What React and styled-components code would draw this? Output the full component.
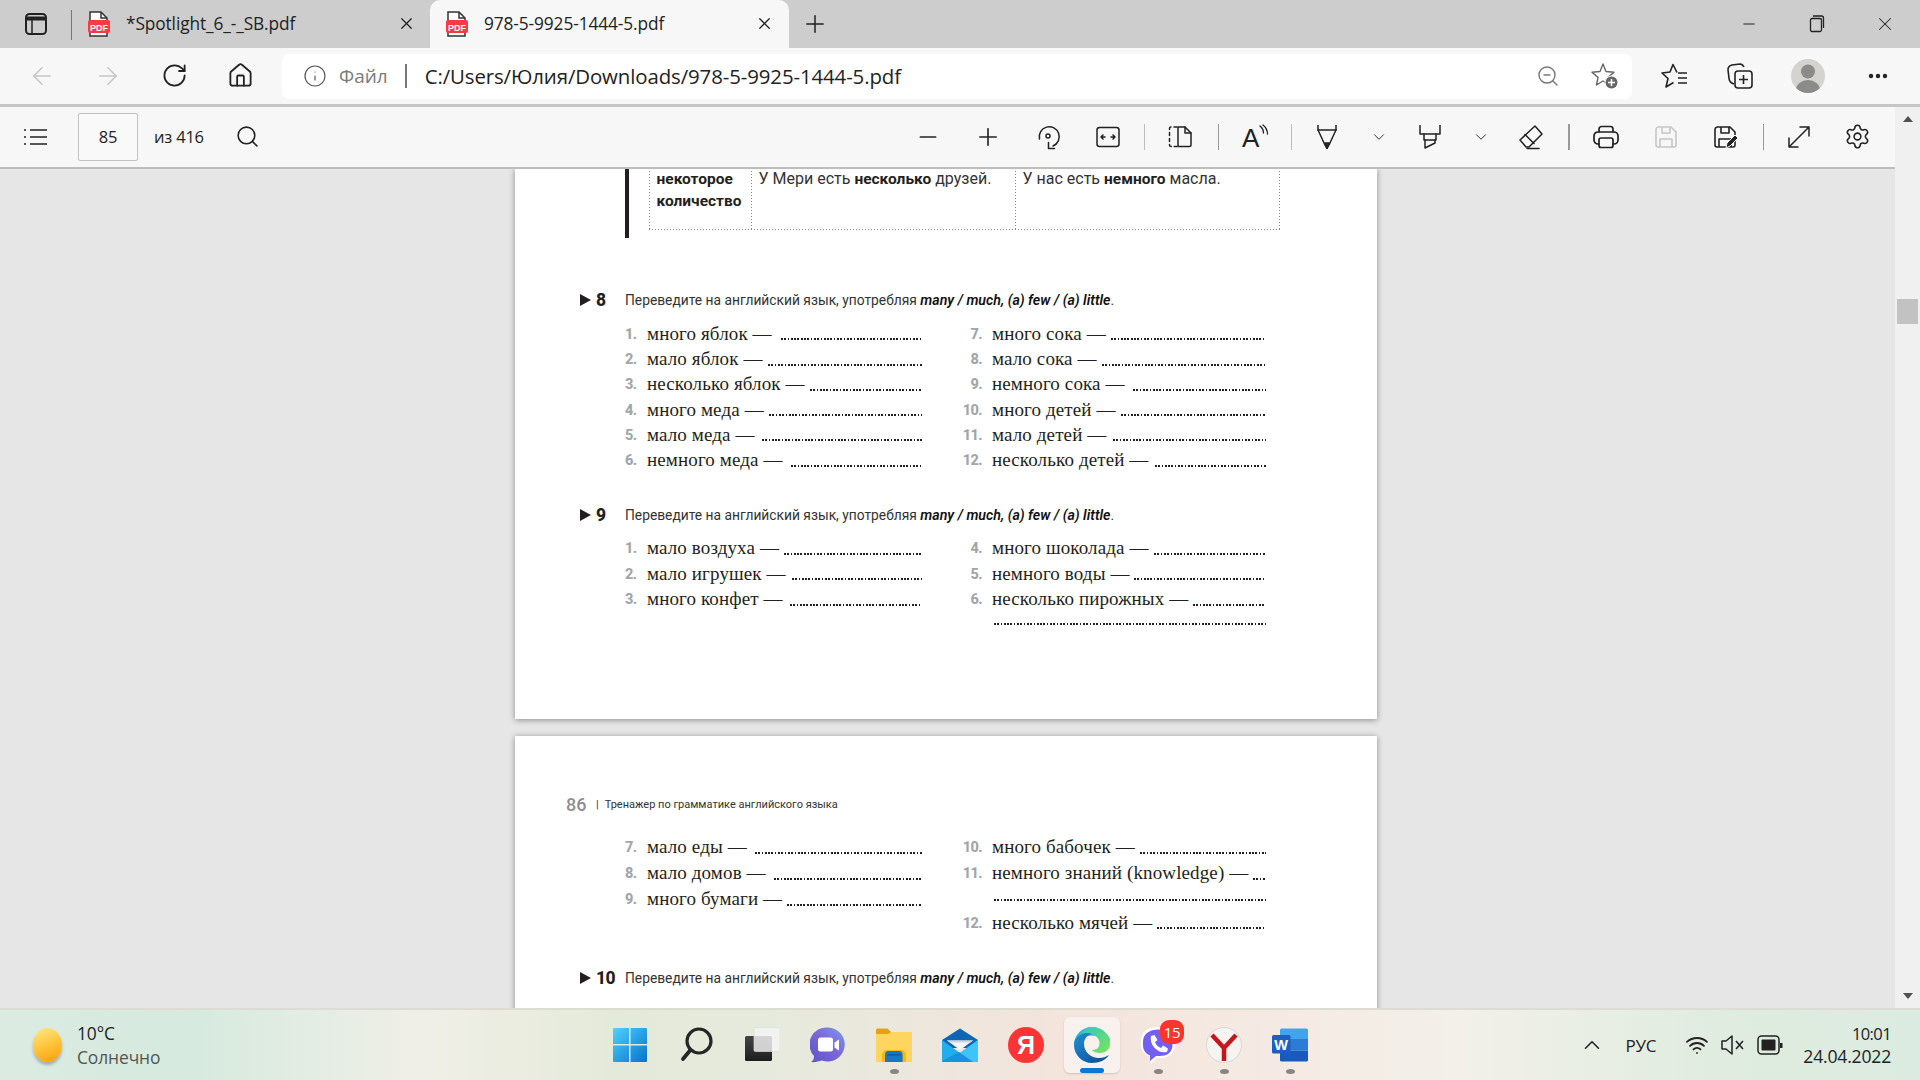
import React from "react";
import styled, { createGlobalStyle } from "styled-components";
import { ArrowLeft, ArrowRight, RotateCw, House, Info, ZoomOut, Search, Minus, Plus, X, ChevronDown, ChevronUp, Settings, MoreHorizontal, Wifi } from "lucide-react";

const Global = createGlobalStyle`
  html, body { margin: 0; padding: 0; width: 1920px; height: 1080px; overflow: hidden; background: #e6e6e6; }
  * { box-sizing: border-box; }
  #root { width: 1920px; height: 1080px; }
`;

const Shell = styled.div`
  width: 1920px; height: 1080px; display: flex; flex-direction: column;
  font-family: "Open Sans", "Noto Sans", sans-serif; color: #222;
`;

const TabBar = styled.div`
  height: 48px; background: #cdcdcd; display: flex; align-items: flex-end; flex: none;
`;
const SideSlot = styled.div`
  width: 71px; height: 48px; display: flex; align-items: center; justify-content: center; padding-bottom: 1px;
`;
const TabDivider = styled.div`
  width: 1px; height: 30px; background: #777; align-self: flex-start; margin-top: 10px;
`;
const Tab = styled.div`
  width: ${p => p.$w}px; height: 48px; display: flex; align-items: center; padding-left: ${p => p.$pl}px;
  background: ${p => (p.$active ? "#f7f7f7" : "transparent")};
  border-radius: 10px 10px 0 0; padding-bottom: 1px;
`;
const TabTitle = styled.span`
  font-size: 17.3px; margin-left: 15px; width: 270px; white-space: nowrap; letter-spacing: -0.1px;
`;
const TabClose = styled.span`
  display: flex; width: 20px; justify-content: center;
`;
const NewTab = styled.div`
  width: 52px; height: 48px; display: flex; align-items: center; justify-content: center; padding-bottom: 1px;
`;
const WinControls = styled.div`
  margin-left: auto; display: flex; height: 48px; align-items: center; padding-right: 1px;
`;
const WinBtn = styled.div`
  width: 68px; display: flex; justify-content: center;
`;

const NavBar = styled.div`
  height: 59px; background: #f7f7f7; border-bottom: 3px solid #c6c6c6; display: flex; align-items: center; flex: none;
`;
const NavBtn = styled.div`
  width: ${p => p.$w || 66}px; display: flex; justify-content: center; flex: none; color: ${p => p.$color || "#222"};
`;
const NavGroup = styled.div`
  display: flex; margin-left: 9px; margin-right: 9px;
`;
const Address = styled.div`
  width: 1350px; height: 45px; background: #fff; border-radius: 7px; display: flex; align-items: center; padding-left: 21px; flex: none;
`;
const Protocol = styled.span`
  font-size: 19px; color: #7b7b7b; margin-left: 12px;
`;
const AddrDivider = styled.span`
  width: 2px; height: 24px; background: #777; margin: 0 18px 0 17px;
`;
const Url = styled.span`
  font-size: 20.4px; color: #222; letter-spacing: -0.1px; white-space: nowrap;
`;
const AddrEnd = styled.div`
  margin-left: auto; display: flex; align-items: center; gap: 31px; padding-right: 13px;
`;
const NavEnd = styled.div`
  display: flex; align-items: center; margin-left: 10px;
`;
const Avatar = styled.div`
  width: 34px; height: 34px; border-radius: 50%; background: #d4d3d0; overflow: hidden; display: flex;
`;

const Work = styled.div`
  flex: 1; min-height: 0; display: flex;
`;
const MainCol = styled.div`
  width: 1895px; display: flex; flex-direction: column; min-width: 0;
`;
const PdfBar = styled.div`
  height: 62px; background: #f7f7f7; border-bottom: 2px solid #bdbdbd; display: flex; align-items: center; flex: none; padding-bottom: 1px;
`;
const BarLeft = styled.div`
  width: 898px; display: flex; align-items: center; flex: none;
`;
const BarSlot = styled.div`
  width: ${p => p.$w}px; display: flex; justify-content: center; align-items: center; flex: none; color: ${p => p.$color || "#222"};
`;
const PageInput = styled.div`
  width: 60px; height: 48px; border: 1px solid #c2c2c2; border-radius: 2px; background: #f9f9f9;
  display: flex; align-items: center; justify-content: center; font-size: 16.5px; margin-left: 6px; letter-spacing: -0.3px;
`;
const PageTotal = styled.span`
  font-size: 16.5px; margin-left: 16px; letter-spacing: -0.2px; width: 81px;
`;
const BarSep = styled.div`
  width: ${p => p.$wd || 1}px; height: 26px; background: ${p => p.$color || "#bcbcbc"};
`;

const Viewport = styled.div`
  flex: 1; min-height: 0; overflow: hidden; background: #e6e6e6; padding-left: 515px;
`;
const Page = styled.div`
  width: 862px; height: ${p => p.$h}px; background: #fff; box-shadow: 0 1px 6px rgba(0,0,0,.4); margin-bottom: 17px;
  padding-top: ${p => p.$pt || 0}px; font-family: "Roboto", "Liberation Sans", sans-serif;
`;
const Callout = styled.div`
  margin-left: 110px; display: flex; height: 69px;
`;
const CalloutBar = styled.div`
  width: 4px; background: #231f20;
`;
const dotV = `linear-gradient(#888 50%, transparent 50%)`;
const dotH = `linear-gradient(90deg, #888 50%, transparent 50%)`;
const Table = styled.div`
  margin-left: 20px; margin-top: -1px; width: 631px; height: 62px; display: grid; grid-template-columns: 102px 264px 265px;
  background-image: ${dotH}, ${dotV};
  background-size: 3px 1px, 1px 3px;
  background-repeat: repeat-x, repeat-y;
  background-position: left bottom, right top;
`;
const Cell = styled.div`
  background-image: ${dotV}; background-size: 1px 3px; background-repeat: repeat-y; background-position: left top;
  padding-left: 7.5px; font-size: 16px; line-height: 21px; color: #333;
  b { color: #231f20; font-weight: 700; font-size: 15.5px; }
`;
const Head = styled.div`
  margin-left: 65px; height: 20px; margin-top: ${p => p.$mt}px; display: flex; align-items: center; font-size: 13.8px; color: #333;
  b { color: #111; font-style: italic; font-weight: 600; font-size: 14.2px; }
`;
const Marker = styled.div`
  width: 45px; flex: none; display: flex; align-items: center; font-weight: 800; font-size: 17.5px; color: #231f20; letter-spacing: -0.5px;
`;
const Triangle = styled.span`
  width: 0; height: 0; border-left: 11px solid #231f20; border-top: 6.5px solid transparent; border-bottom: 6.5px solid transparent; margin-right: 5px;
`;
const Columns = styled.div`
  margin-left: 110px; margin-top: ${p => p.$mt}px; display: flex;
`;
const Col = styled.div`
  width: ${p => p.$w}px; margin-right: ${p => p.$mr || 0}px;
`;
const Row = styled.div`
  height: ${p => p.$h}px; display: flex; align-items: center; padding-left: ${p => p.$indent || 0}px;
`;
const Num = styled.span`
  width: ${p => p.$w}px; flex: none; font-size: 14.5px; font-weight: 800; color: #a3a5a8; padding-top: 1px;
  text-align: ${p => p.$right ? "right" : "left"}; padding-right: ${p => p.$right ? 10 : 0}px; letter-spacing: -0.6px;
`;
const ItemText = styled.span`
  font-family: "Liberation Serif", serif; font-size: 19px; color: #231f20; white-space: nowrap; letter-spacing: 0.12px;
`;
const Dots = styled.span`
  flex: 1; align-self: flex-end; height: 2px; margin: 0 0 ${p => p.$mb || 6}px ${p => p.$gap || 0}px; min-width: 0;
  background: repeating-linear-gradient(90deg, #231f20 0 1.7px, transparent 1.7px 3.3px);
`;
const RunHead = styled.div`
  margin-left: 51px; height: 20px; display: flex; align-items: center; font-size: 11px; color: #333;
`;
const PageNo = styled.span`
  font-size: 18px; font-weight: 500; color: #8d8f92; margin-right: 10px; width: 20px;
`;
const Pipe = styled.span`
  margin-right: 6px;
`;

const Scroll = styled.div`
  width: 25px; background: #f0f0f0; display: flex; flex-direction: column; align-items: center; flex: none;
`;
const ArrowUp = styled.span`
  margin-top: 9px; width: 0; height: 0; border-left: 5.5px solid transparent; border-right: 5.5px solid transparent; border-bottom: 6px solid #505050;
`;
const Thumb = styled.div`
  margin-top: 177px; width: 21px; height: 25px; background: #c2c2c2;
`;
const ArrowDown = styled.span`
  margin-top: auto; margin-bottom: 9px; width: 0; height: 0; border-left: 5.5px solid transparent; border-right: 5.5px solid transparent; border-top: 6px solid #505050;
`;

const Taskbar = styled.div`
  height: 72px; flex: none; display: flex; align-items: center;
  background: linear-gradient(90deg,#dbebe1 0%,#d6eadf 10%,#f0efe7 22%,#e4ead9 32%,#e6eadd 40%,#f3e4dc 55%,#f5ebe4 68%,#f2f0e9 76%,#dfecdf 90%,#dcebe1 100%);
  border-top: 2px solid #dddcd1;
`;
const Weather = styled.div`
  width: 597px; display: flex; align-items: center; padding-left: 33px; flex: none;
`;
const Sun = styled.div`
  width: 29px; height: 34px; border-radius: 50%; background: linear-gradient(160deg,#ffe680 5%,#ffc53d 50%,#ff9f0a 95%); box-shadow: 0 3px 3px rgba(0,0,0,.25);
`;
const WeatherText = styled.div`
  margin-left: 15px; display: flex; flex-direction: column; gap: 3px; font-size: 17.4px; line-height: 21px; letter-spacing: -0.1px;
`;
const Muted = styled.span`
  color: #555;
`;
const Apps = styled.div`
  display: flex; height: 70px;
`;
const AppSlot = styled.div`
  width: 66px; height: 70px; display: flex; align-items: center; justify-content: center; position: relative;
  &::before {
    content: ""; display: ${p => p.$active ? "block" : "none"}; position: absolute; left: 5px; right: 5px; top: 7px; bottom: 7px;
    background: #f8f1ed; border-radius: 6px; box-shadow: 0 1px 2px rgba(0,0,0,.15);
  }
  > svg { position: relative; }
`;
const RunDot = styled.span`
  position: absolute; left: 50%; bottom: 6px; margin-left: -4.5px; width: 9px; height: 5px; border-radius: 50%; background: #858585;
`;
const ActiveBar = styled.span`
  position: absolute; left: 50%; bottom: 7px; margin-left: -12px; width: 24px; height: 5px; border-radius: 3px; background: #0c78d4;
`;
const Badge = styled.span`
  position: absolute; left: 35px; top: 10px; width: 24px; height: 24px; border-radius: 9px; background: #f9352e; color: #fff;
  font-size: 15px; line-height: 24px; text-align: center; letter-spacing: -0.3px;
`;
const Tray = styled.div`
  margin-left: auto; display: flex; align-items: center; padding-right: 29px;
`;
const TrayLang = styled.span`
  font-size: 17px; margin: 0 29px 0 20px; letter-spacing: -0.2px;
`;
const TrayGap = styled.span`
  width: 12px;
`;
const Clock = styled.div`
  margin-left: 20px; text-align: right; font-size: 17.6px; line-height: 23px; letter-spacing: -0.2px; display: flex; flex-direction: column;
`;
const ClockTime = styled.span`
  font-size: 16.5px; letter-spacing: -0.6px;
`;

const S = { fill: "none", stroke: "currentColor", strokeWidth: 1.5, strokeLinecap: "round", strokeLinejoin: "round" };

const PdfIcon = () => (
  <svg width="24" height="26" viewBox="0 0 24 26">
    <path d="M3 1h11l6 6v18H3z" fill="#fff" stroke="#333" strokeWidth="1.5" />
    <path d="M14 1v6h6" fill="none" stroke="#333" strokeWidth="1.5" />
    <rect x="1" y="9" width="22" height="13" rx="2" fill="#f53c45" />
    <text x="12" y="19.5" textAnchor="middle" fontSize="9" fontWeight="700" fill="#fff" fontFamily="Liberation Sans">PDF</text>
  </svg>
);
const SideIcon = () => (
  <svg width="24" height="24" viewBox="0 0 24 24" fill="none" stroke="#222" strokeWidth="2">
    <rect x="2" y="2" width="20" height="20" rx="3.5" />
    <path d="M3 6.5h18" strokeWidth="4" />
    <path d="M8 8v14" strokeWidth="1.5" />
  </svg>
);
const RestoreIcon = () => (
  <svg width="16" height="18" viewBox="0 0 16 18" fill="none" stroke="#222" strokeWidth="1.3">
    <rect x="1.5" y="3.5" width="11" height="13" rx="1.5" />
    <path d="M4 1h8.5a2 2 0 0 1 2 2v10" />
  </svg>
);
const FavAdd = () => (
  <svg width="28" height="28" viewBox="0 0 28 28" fill="none" stroke="#666" strokeWidth="1.4" strokeLinejoin="round">
    <path d="M12 2l3 7.5 8 .7-6 5.2 1.5 7.6L12 19l-6.5 4 1.5-7.6-6-5.2 8-.7z" />
    <circle cx="20.5" cy="20.5" r="6.5" fill="#666" stroke="#fff" strokeWidth="1" />
    <path d="M20.5 17v7M17 20.500h7" stroke="#fff" strokeWidth="1.6" />
  </svg>
);
const FavList = () => (
  <svg width="28" height="28" viewBox="0 0 28 28" fill="none" stroke="#222" strokeWidth="1.6" strokeLinejoin="round">
    <path d="M16 10.500L12 2.500 9 10l-8 1 6 5.500L5 25l7.500-4.500" />
    <path d="M17 11h9M17 16h9M17 21h9" />
  </svg>
);
const Collections = () => (
  <svg width="28" height="28" viewBox="0 0 28 28" fill="none" stroke="#222" strokeWidth="1.6" strokeLinejoin="round">
    <path d="M8 22c-3-1-5-3-5-6l-1-8a5 5 0 0 1 4-5l8-1c2 0 3 1 4 3" />
    <rect x="9" y="9" width="17" height="17" rx="3" />
    <path d="M17.500 13v9M13 17.500h9" />
  </svg>
);
const Person = () => (
  <svg width="34" height="34" viewBox="0 0 34 34" fill="#8b8b89">
    <circle cx="17" cy="12.5" r="7" />
    <ellipse cx="17" cy="31" rx="12" ry="10" />
  </svg>
);
const ListIcon = () => (
  <svg width="26" height="20" viewBox="0 0 26 20" fill="none" stroke="#222" strokeWidth="1.6">
    <path d="M7 3h17M7 10h17M7 17h17" />
    <path d="M1 3h2M1 10h2M1 17h2" />
  </svg>
);
const RotateIcon = () => (
  <svg width="26" height="26" viewBox="0 0 26 26" {...S}>
    <path d="M4.500 15A10 10 0 1 1 18 22" />
    <circle cx="13" cy="12" r="2" />
    <path d="M13.500 18.500v6h6" />
  </svg>
);
const FitIcon = () => (
  <svg width="24" height="22" viewBox="0 0 24 22" {...S}>
    <rect x="1" y="1.5" width="22" height="19" rx="2.5" />
    <path d="M9 11H5M7 9l-2 2 2 2M15 11h4M17 9l2 2-2 2" />
  </svg>
);
const TwoPage = () => (
  <svg width="24" height="24" viewBox="0 0 24 24" {...S}>
    <path d="M9 2H3a1.500 1.500 0 0 0-1.500 1.500V20A1.500 1.500 0 0 0 3 21.500h6" strokeDasharray="3 3" />
    <path d="M10 2h7l6 6v12a1.500 1.500 0 0 1-1.500 1.500H10z" />
    <path d="M17 2v6h6" />
  </svg>
);
const ReadIcon = () => (
  <svg width="32" height="34" viewBox="0 0 32 34" fill="none" stroke="#222" strokeWidth="1.3" strokeLinecap="round">
    <text x="4" y="27" fontSize="26" fontFamily="Liberation Sans" fill="#222" stroke="none">A</text>
    <path d="M22 6c2.500 2 3.500 4 3.500 7" />
    <path d="M25 5c3 2.500 4.500 5 4.500 9" />
  </svg>
);
const PenIcon = () => (
  <svg width="24" height="24" viewBox="0 0 24 24" {...S}>
    <path d="M3 0v5h18V0" />
    <path d="M3 5l7 15 2 3.500 2-3.500 7-15" />
    <path d="M10 18h4l-2 5.500z" fill="#333" />
  </svg>
);
const MarkerIcon = () => (
  <svg width="24" height="24" viewBox="0 0 24 24" {...S}>
    <path d="M2 0v9h20V0" />
    <path d="M6 9v6h12V9" />
    <path d="M7 15v8l10-5v-3" />
  </svg>
);
const EraserIcon = () => (
  <svg width="26" height="26" viewBox="0 0 26 26" {...S}>
    <path d="M17 2l7 8-13 13H8l-6-7z" />
    <path d="M7 10.500l9 9" />
    <path d="M9 24.500h12" />
  </svg>
);
const PrintIcon = () => (
  <svg width="26" height="24" viewBox="0 0 26 24" {...S} strokeWidth="1.7">
    <path d="M6 7V4a2.500 2.500 0 0 1 2.500-2.500h9A2.500 2.500 0 0 1 20 4v3" />
    <path d="M6 19H5a4 4 0 0 1-4-4v-4a4 4 0 0 1 4-4h16a4 4 0 0 1 4 4v4a4 4 0 0 1-4 4h-1" />
    <rect x="6" y="13" width="14" height="9.500" rx="2" />
  </svg>
);
const SaveIcon = ({ c = "#222", pen }) => (
  <svg width="24" height="24" viewBox="0 0 24 24" fill="none" stroke={c} strokeWidth="1.6" strokeLinejoin="round">
    <path d="M5 2h12l5 5v13a2 2 0 0 1-2 2H4a2 2 0 0 1-2-2V4.500A2.500 2.500 0 0 1 5 2z" />
    <path d="M8 2v6h8V2M6 22v-8h12v8" />
    {pen && <path d="M13 23l1-5 8-8 3 3-8 8z" fill="#222" stroke="#f7f7f7" strokeWidth="1" />}
  </svg>
);
const ExpandIcon = () => (
  <svg width="24" height="24" viewBox="0 0 24 24" {...S}>
    <path d="M2 22L22 2M13 2h9v9M2 13v9h9" />
  </svg>
);

const WinLogo = () => (
  <svg width="36" height="36" viewBox="0 0 36 36">
    <defs>
      <linearGradient id="wg" x1="0" y1="0" x2="1" y2="1"><stop offset="0" stopColor="#4fd2fd" /><stop offset="1" stopColor="#0473cf" /></linearGradient>
    </defs>
    <path d="M1 2a1 1 0 0 1 1-1h15v16H1zM18.500 1H34a1 1 0 0 1 1 1v15H18.500zM1 18.500h16V35H2a1 1 0 0 1-1-1zM18.500 18.500H35V34a1 1 0 0 1-1 1H18.500z" fill="url(#wg)" />
  </svg>
);
const SearchLogo = () => (
  <svg width="34" height="36" viewBox="0 0 34 36" fill="none" stroke="#262626" strokeLinecap="round">
    <circle cx="20" cy="14" r="12" strokeWidth="3.2" />
    <path d="M11 23.500L4 32" strokeWidth="3.8" />
  </svg>
);
const TaskLogo = () => (
  <svg width="36" height="36" viewBox="0 0 36 36">
    <defs><linearGradient id="tg" x1="0" y1="0" x2="0" y2="1"><stop offset="0" stopColor="#444" /><stop offset="1" stopColor="#1e1e1e" /></linearGradient></defs>
    <rect x="1" y="9" width="27" height="25" rx="1.5" fill="url(#tg)" />
    <rect x="10" y="0.500" width="26" height="24" rx="1.5" fill="#f4f4f4" fillOpacity=".82" stroke="#dcdcdc" strokeWidth=".7" />
  </svg>
);
const MeetLogo = () => (
  <svg width="36" height="36" viewBox="0 0 36 36">
    <defs><linearGradient id="mg" x1="1" y1="0" x2="0" y2="1"><stop offset="0" stopColor="#7b9bf0" /><stop offset=".5" stopColor="#7a66d4" /><stop offset="1" stopColor="#5a56c6" /></linearGradient></defs>
    <path d="M18 0.500a17 17 0 1 1-6 33c-3 1-7 2-11 1.500 2-1 3-3 3-6A17 17 0 0 1 18 .500z" fill="url(#mg)" />
    <rect x="8" y="10.500" width="15" height="14" rx="2.500" fill="#fff" />
    <path d="M24.500 15.500l4.500-3v11l-4.500-3z" fill="#fff" />
  </svg>
);
const FolderLogo = () => (
  <svg width="38" height="34" viewBox="0 0 38 34">
    <path d="M1 2a1.500 1.500 0 0 1 1.500-1.500h10L16 4h20.500A1.500 1.500 0 0 1 37 5.500V11H1z" fill="#e3a11a" />
    <path d="M1 6h12l3-2h21v29a1 1 0 0 1-1 1H2a1 1 0 0 1-1-1z" fill="#fdd55f" />
    <path d="M7 34v-7a5 5 0 0 1 5-5h14a5 5 0 0 1 5 5v7z" fill="#f6b810" />
    <path d="M8 34v-7a4 4 0 0 1 4-4h14a4 4 0 0 1 4 4v7z" fill="#1478c7" transform="translate(3.600 0) scale(.8 1)" />
    <rect x="12.500" y="26" width="13" height="1.600" fill="#0d5ea5" />
  </svg>
);
const MailLogo = () => (
  <svg width="38" height="34" viewBox="0 0 38 34">
    <path d="M19 0.500L37 12v8H1v-8z" fill="#0f66b5" />
    <path d="M6 12.500h26L19 22z" fill="#f3f5f7" />
    <path d="M6 12.500h26l-3 2H9z" fill="#cfd4d9" />
    <path d="M1 12l18 13 18-13v21a1 1 0 0 1-1 1H2a1 1 0 0 1-1-1z" fill="#22aeee" />
    <path d="M19 25L37 12v21a1 1 0 0 1-1 1H30z" fill="#3cc5f6" />
    <path d="M1 33l17-9 14 10H2a1 1 0 0 1-1-1z" fill="#1692e0" />
  </svg>
);
const YaLogo = () => (
  <svg width="36" height="36" viewBox="0 0 36 36">
    <circle cx="18" cy="18" r="18" fill="#fb3535" />
    <text x="18" y="27" textAnchor="middle" fontSize="25" fontWeight="700" fill="#fff" fontFamily="Liberation Sans">Я</text>
  </svg>
);
const EdgeLogo = () => (
  <svg width="38" height="38" viewBox="0 0 38 38">
    <defs>
      <linearGradient id="eg1" x1="0" y1="0" x2="1" y2="1"><stop offset="0" stopColor="#2ab0de" /><stop offset="1" stopColor="#37c8c9" /></linearGradient>
      <linearGradient id="eg2" x1="0" y1="0" x2="1" y2="1"><stop offset="0" stopColor="#2fc6c2" /><stop offset="1" stopColor="#7ae65a" /></linearGradient>
      <linearGradient id="eg3" x1="0" y1="0" x2="1" y2="1"><stop offset="0" stopColor="#1f8fd6" /><stop offset="1" stopColor="#0b4a92" /></linearGradient>
    </defs>
    <path d="M1 19C1 9 9 1 19 1c8 0 15 5 18 12 0 2-1 4-4 5-4-7-12-10-19-8-6 2-11 6-13 9z" fill="url(#eg1)" />
    <path d="M19 1c10 0 18 8 18 17 0 5-4 9-10 9-3 0-7-1-8-3 3 0 6-1 7-4 2-4-1-9-5-11-5-3-11-2-15 1C9 5 14 1 19 1z" fill="url(#eg2)" />
    <path d="M1 19c0-7 6-12 13-12 2 0 3 0 5 1-5 1-8 5-8 10 0 8 7 14 15 14 4 0 7-1 10-3-3 5-10 8-17 8-10 0-18-8-18-18z" fill="url(#eg3)" />
    <path d="M19 15c-3 0-4 2-4 4 0 4 5 7 11 7 3 0 6-1 8-3-2 2-5 3-8 3-6 0-12-3-12-7 0-2 2-4 5-4z" fill="#f8f1ed" />
  </svg>
);
const ViberLogo = () => (
  <svg width="36" height="38" viewBox="0 0 36 38">
    <path d="M18 1c10 0 17 5 17 14v4c0 9-7 13-15 13h-3l-6 6v-7C5 29 1 25 1 18v-3C1 6 8 1 18 1z" fill="#fff" />
    <path d="M18 3.500c8 0 14.500 4 14.500 11.500v4c0 8-6 11-13 11h-3.500l-6 5v-5.500c-4-1.500-7-5-7-10.500v-4C3.500 7.500 10 3.500 18 3.500z" fill="#7360f2" />
    <path d="M11 10l3.500-1 3 5-2.500 2c1 3 3 5 6 6l2-2.500 5 3-1 3.500C18 28 9 19 11 10z" fill="#fff" />
  </svg>
);
const YBrowser = () => (
  <svg width="36" height="36" viewBox="0 0 36 36">
    <circle cx="18" cy="18" r="17.500" fill="#f6f4f1" stroke="#d8d6d3" />
    <path d="M6 8l12 13 12-13M18 21v13" fill="none" stroke="#c7161b" strokeWidth="4.500" />
  </svg>
);
const WordLogo = () => (
  <svg width="36" height="34" viewBox="0 0 36 34">
    <path d="M8 2a1.500 1.500 0 0 1 1.500-1.500h25A1.500 1.500 0 0 1 36 2v9H8z" fill="#41a5ee" />
    <rect x="8" y="11" width="28" height="11.500" fill="#2b7cd3" />
    <path d="M8 22.500h28V32a1.500 1.500 0 0 1-1.500 1.500h-25A1.500 1.500 0 0 1 8 32z" fill="#185abd" />
    <rect x="0" y="7" width="18.500" height="18.500" rx="1.500" fill="#1c5fc0" />
    <text x="9.200" y="22" textAnchor="middle" fontSize="14.500" fontWeight="700" fill="#fff" fontFamily="Liberation Sans">W</text>
  </svg>
);
const MuteIcon = () => (
  <svg width="24" height="22" viewBox="0 0 24 22" fill="none" stroke="#222" strokeWidth="1.5" strokeLinejoin="round">
    <path d="M1 7h4l6-5v18l-6-5H1z" />
    <path d="M15 7l7 8M22 7l-7 8" />
  </svg>
);
const BatteryIcon = () => (
  <svg width="26" height="22" viewBox="0 0 26 22" fill="none" stroke="#222" strokeWidth="1.5">
    <rect x="1" y="2" width="21" height="18" rx="3.500" />
    <rect x="4.500" y="5.500" width="14" height="11" rx="1" fill="#222" stroke="none" />
    <rect x="23" y="9" width="2.500" height="5" fill="#222" stroke="none" />
  </svg>
);

const dash = " —";

function ExRow({ n, text, left, h = 25.3, gap }) {
  return (
    <Row $h={h}>
      <Num $w={left ? 22 : 33} $right={!left}>{n}.</Num>
      <ItemText>{text}{dash}</ItemText>
      <Dots $gap={gap} />
    </Row>
  );
}

function Exercise({ no, mt }) {
  return (
    <Head $mt={mt}>
      <Marker><Triangle />{no}</Marker>
      <span>Переведите на английский язык, употребляя <b>many / much, (a) few / (a) little</b>.</span>
    </Head>
  );
}

const ex8L = [[1, "много яблок", 9], [2, "мало яблок", 5], [3, "несколько яблок", 5], [4, "много меда", 5], [5, "мало меда", 7], [6, "немного меда", 8]];
const ex8R = [[7, "много сока", 5], [8, "мало сока", 5], [9, "немного сока", 8], [10, "много детей", 5], [11, "мало детей", 7], [12, "несколько детей", 6]];
const ex9L = [[1, "мало воздуха", 5], [2, "мало игрушек", 6], [3, "много конфет", 7]];
const ex9R = [[4, "много шоколада", 5], [5, "немного воды", 4], [6, "несколько пирожных", 5]];
const p2L = [[7, "мало еды", 8], [8, "мало домов", 8], [9, "много бумаги", 5]];

const BarIcons = [
  [60, <Minus size={26} strokeWidth={1.6} />], [60, <Plus size={28} strokeWidth={1.4} />], [60, <RotateIcon />], [60, <FitIcon />],
  [12, <BarSep />], [60, <TwoPage />], [16, <BarSep $color="#999" />], [56, <ReadIcon />], [18, <BarSep />],
  [54, <PenIcon />], [50, <ChevronDown size={18} strokeWidth={1.2} />], [52, <MarkerIcon />], [50, <ChevronDown size={18} strokeWidth={1.2} />],
  [50, <EraserIcon />], [26, <BarSep $color="#999" $wd={2} />], [48, <PrintIcon />], [72, <SaveIcon c="#c6c6c6" />],
  [46, <SaveIcon pen />], [30, <BarSep $color="#999" />], [42, <ExpandIcon />], [75, <Settings size={27} strokeWidth={1.4} />],
];

export default function App() {
  return (
    <Shell>
      <Global />
      <TabBar>
        <SideSlot><SideIcon /></SideSlot>
        <TabDivider />
        <Tab $w={358} $pl={15}>
          <PdfIcon /><TabTitle>*Spotlight_6_-_SB.pdf</TabTitle>
          <TabClose><X size={19} strokeWidth={1.6} /></TabClose>
        </Tab>
        <Tab $w={359} $active $pl={15}>
          <PdfIcon /><TabTitle>978-5-9925-1444-5.pdf</TabTitle>
          <TabClose><X size={19} strokeWidth={1.6} /></TabClose>
        </Tab>
        <NewTab><Plus size={28} strokeWidth={1.3} /></NewTab>
        <WinControls>
          <WinBtn><Minus size={18} strokeWidth={1.3} /></WinBtn>
          <WinBtn><RestoreIcon /></WinBtn>
          <WinBtn><X size={22} strokeWidth={1.1} /></WinBtn>
        </WinControls>
      </TabBar>

      <NavBar>
        <NavGroup>
          <NavBtn $color="#c6c6c6"><ArrowLeft size={28} strokeWidth={1.3} /></NavBtn>
          <NavBtn $color="#c6c6c6"><ArrowRight size={28} strokeWidth={1.3} /></NavBtn>
          <NavBtn><RotateCw size={27} strokeWidth={1.6} /></NavBtn>
          <NavBtn><House size={27} strokeWidth={1.6} /></NavBtn>
        </NavGroup>
        <Address>
          <Info size={24} strokeWidth={1.2} color="#555" />
          <Protocol>Файл</Protocol>
          <AddrDivider />
          <Url>C:/Users/Юлия/Downloads/978-5-9925-1444-5.pdf</Url>
          <AddrEnd>
            <ZoomOut size={24} strokeWidth={1.4} color="#777" />
            <FavAdd />
          </AddrEnd>
        </Address>
        <NavEnd>
          <NavBtn><FavList /></NavBtn>
          <NavBtn $w={64}><Collections /></NavBtn>
          <NavBtn $w={72}><Avatar><Person /></Avatar></NavBtn>
          <NavBtn $w={68}><MoreHorizontal size={24} strokeWidth={2.4} /></NavBtn>
        </NavEnd>
      </NavBar>

      <Work>
        <MainCol>
          <PdfBar>
            <BarLeft>
              <BarSlot $w={72}><ListIcon /></BarSlot>
              <PageInput>85</PageInput>
              <PageTotal>из 416</PageTotal>
              <Search size={25} strokeWidth={1.5} />
            </BarLeft>
            {BarIcons.map(([w, icon], i) => <BarSlot key={i} $w={w}>{icon}</BarSlot>)}
          </PdfBar>
          <Viewport>
            <Page $h={550}>
              <Callout>
                <CalloutBar />
                <Table>
                  <Cell><b>некоторое<br />количество</b></Cell>
                  <Cell>У Мери есть <b>несколько</b> друзей.</Cell>
                  <Cell>У нас есть <b>немного</b> масла.</Cell>
                </Table>
              </Callout>
              <Exercise no="8" mt={52} />
              <Columns $mt={11}>
                <Col $w={297} $mr={37}>{ex8L.map(([n, t, g]) => <ExRow key={n} n={n} text={t} left gap={g} />)}</Col>
                <Col $w={307}>{ex8R.map(([n, t, g]) => <ExRow key={n} n={n} text={t} gap={g} />)}</Col>
              </Columns>
              <Exercise no="9" mt={32} />
              <Columns $mt={11}>
                <Col $w={297} $mr={37}>{ex9L.map(([n, t, g]) => <ExRow key={n} n={n} text={t} left gap={g} />)}</Col>
                <Col $w={307}>
                  {ex9R.map(([n, t, g]) => <ExRow key={n} n={n} text={t} gap={g} />)}
                  <Row $h={25.3} $indent={35}><Dots $mb={12} /></Row>
                </Col>
              </Columns>
            </Page>
            <Page $h={400} $pt={58}>
              <RunHead><PageNo>86</PageNo><Pipe>|</Pipe>Тренажер по грамматике английского языка</RunHead>
              <Columns $mt={20}>
                <Col $w={297} $mr={37}>{p2L.map(([n, t, g]) => <ExRow key={n} n={n} text={t} left gap={g} h={26} />)}</Col>
                <Col $w={307}>
                  <ExRow n={10} text="много бабочек" h={26} gap={5} />
                  <ExRow n={11} text="немного знаний (knowledge)" h={26} gap={5} />
                  <Row $h={25} $indent={35}><Dots $mb={10} /></Row>
                  <ExRow n={12} text="несколько мячей" h={24} gap={5} />
                </Col>
              </Columns>
              <Exercise no="10" mt={33} />
            </Page>
          </Viewport>
        </MainCol>
        <Scroll>
          <ArrowUp />
          <Thumb />
          <ArrowDown />
        </Scroll>
      </Work>

      <Taskbar>
        <Weather>
          <Sun />
          <WeatherText><span>10°C</span><Muted>Солнечно</Muted></WeatherText>
        </Weather>
        <Apps>
          <AppSlot><WinLogo /></AppSlot>
          <AppSlot><SearchLogo /></AppSlot>
          <AppSlot><TaskLogo /></AppSlot>
          <AppSlot><MeetLogo /></AppSlot>
          <AppSlot><FolderLogo /><RunDot /></AppSlot>
          <AppSlot><MailLogo /></AppSlot>
          <AppSlot><YaLogo /></AppSlot>
          <AppSlot $active><EdgeLogo /><ActiveBar /></AppSlot>
          <AppSlot><ViberLogo /><Badge>15</Badge><RunDot /></AppSlot>
          <AppSlot><YBrowser /><RunDot /></AppSlot>
          <AppSlot><WordLogo /><RunDot /></AppSlot>
        </Apps>
        <Tray>
          <ChevronUp size={26} strokeWidth={1.4} />
          <TrayLang>РУС</TrayLang>
          <Wifi size={24} strokeWidth={1.8} />
          <TrayGap />
          <MuteIcon />
          <TrayGap />
          <BatteryIcon />
          <Clock><ClockTime>10:01</ClockTime><span>24.04.2022</span></Clock>
        </Tray>
      </Taskbar>
    </Shell>
  );
}
